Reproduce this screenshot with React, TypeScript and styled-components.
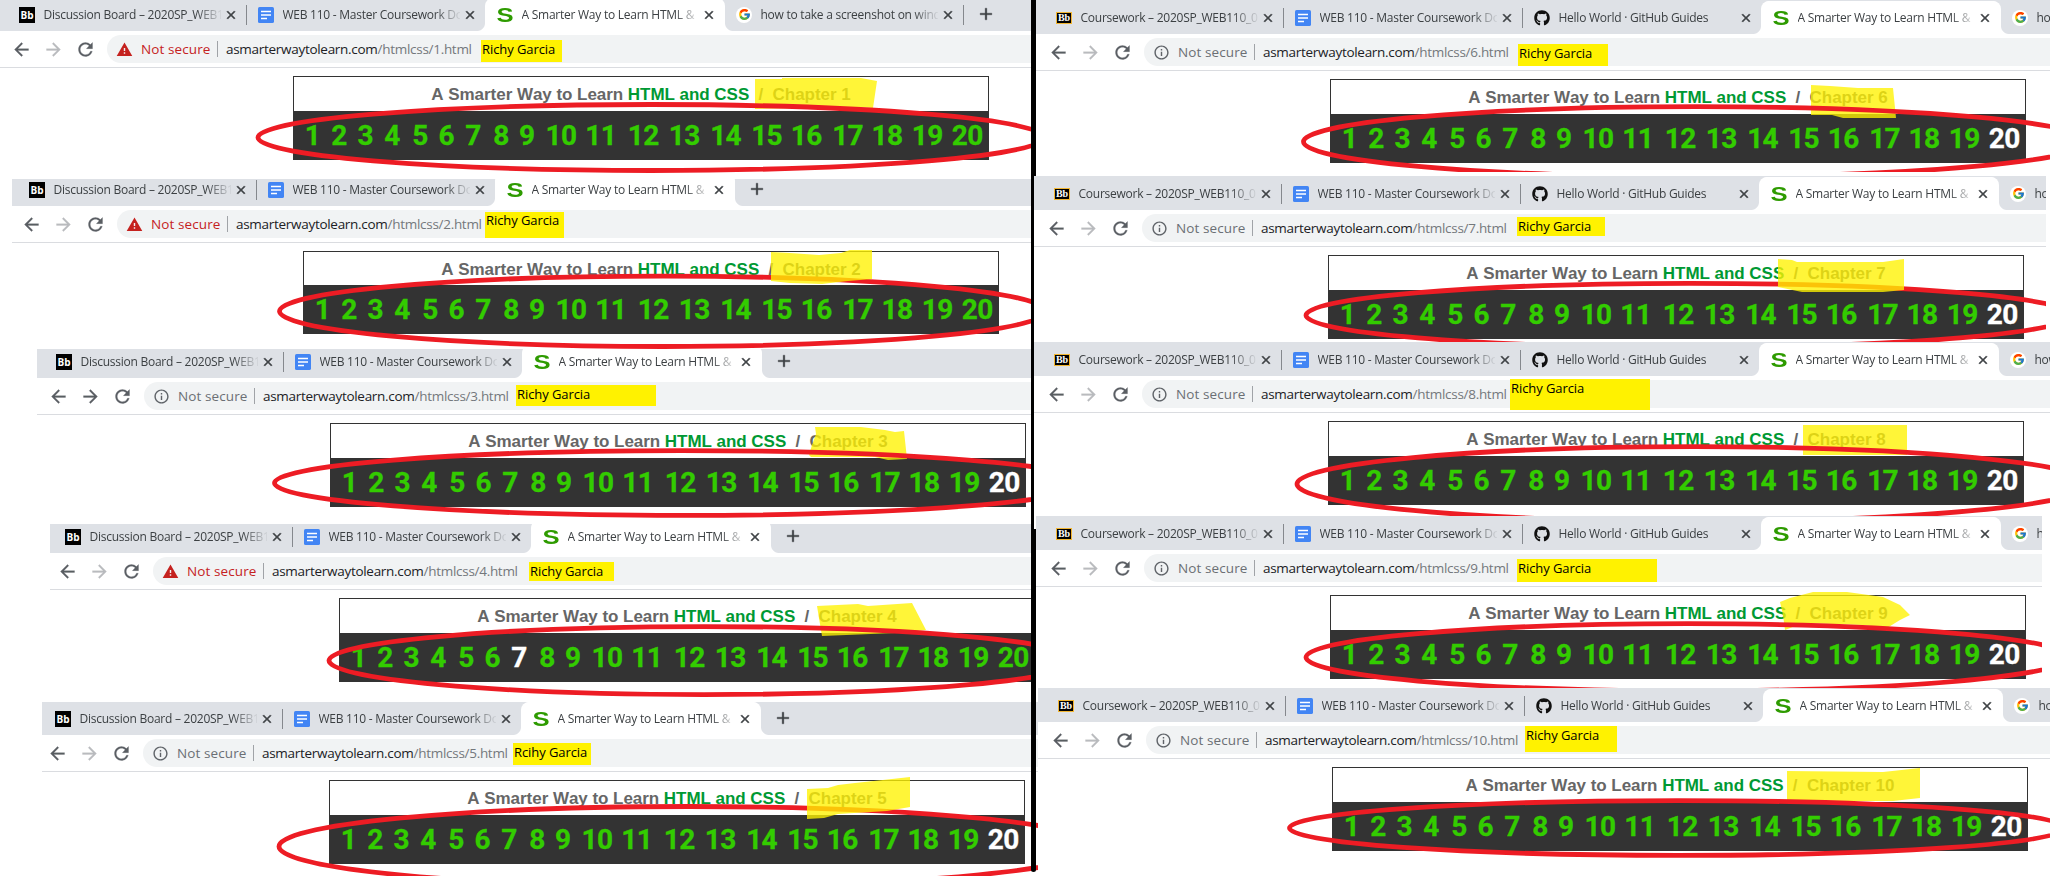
import React from 'react';
import styled, { createGlobalStyle, css } from 'styled-components';
import {
  MdAdd,
  MdArrowBack,
  MdArrowForward,
  MdClose,
  MdInfoOutline,
  MdRefresh,
  MdWarning,
} from 'react-icons/md';
import { FaGithub } from 'react-icons/fa';
import { FcGoogle } from 'react-icons/fc';

const ui = '"Open Sans", "Noto Sans", sans-serif';
const heading = '"Liberation Sans", Arial, sans-serif';

const GlobalStyle = createGlobalStyle`
  * { box-sizing: border-box; }
  body { margin: 0; background: #fff; overflow: hidden; }
`;

const Board = styled.main`
  position: relative;
  width: 2050px;
  height: 876px;
  overflow: hidden;
  background: #fff;
`;

const Divider = styled.div<{ $top: number; $height: number; $width?: number; $round?: boolean }>`
  position: absolute;
  left: 1031px;
  top: ${(p) => p.$top}px;
  width: ${(p) => p.$width ?? 5}px;
  height: ${(p) => p.$height}px;
  background: #000;
  border-radius: ${(p) => (p.$round ? '0 0 3px 3px' : 0)};
`;

const WindowFrame = styled.section<{ $x: number; $y: number; $w: number; $h: number }>`
  position: absolute;
  left: ${(p) => p.$x}px;
  top: ${(p) => p.$y}px;
  width: ${(p) => p.$w}px;
  height: ${(p) => p.$h}px;
  overflow: hidden;
  background: #fff;
`;

const TabStrip = styled.div<{ $h: number; $shift: number }>`
  display: flex;
  align-items: flex-end;
  height: ${(p) => p.$h}px;
  padding-left: ${(p) => p.$shift + 8}px;
  background: #dee1e6;
  overflow: hidden;
`;

const flare = css`
  content: '';
  position: absolute;
  bottom: 0;
  width: 8px;
  height: 8px;
`;

const TabItem = styled.div<{ $active?: boolean; $line?: boolean }>`
  position: relative;
  display: flex;
  flex: none;
  align-items: center;
  width: 239px;
  height: 33px;
  padding: 0 8px 0 11px;
  ${(p) =>
    p.$line &&
    css`
      &::after {
        content: '';
        position: absolute;
        right: 0;
        top: 7px;
        width: 1px;
        height: 20px;
        background: #85888d;
      }
    `}
  ${(p) =>
    p.$active &&
    css`
      background: #fff;
      border-radius: 8px 8px 0 0;
      box-shadow: -1px 0 0 #fff;
      &::before {
        ${flare}
        left: -9px;
        background: radial-gradient(circle at 0 0, transparent 7.5px, #fff 8.5px);
      }
      &::after {
        ${flare}
        right: -8px;
        background: radial-gradient(circle at 100% 0, transparent 7.5px, #fff 8.5px);
      }
    `}
`;

const TabTitle = styled.span`
  flex: none;
  width: 177px;
  margin-left: 8.5px;
  overflow: hidden;
  white-space: nowrap;
  font: 12px/18px ${ui};
  letter-spacing: -0.25px;
  color: #3c4043;
  mask-image: linear-gradient(to right, #000 152px, transparent 179px);
`;

const TabClose = styled(MdClose)`
  flex: none;
  width: 14px;
  height: 14px;
  margin-left: 3.5px;
  color: #3c4043;
  path:not([fill='none']) {
    stroke: currentColor;
    stroke-width: 1px;
  }
`;

const NewTab = styled(MdAdd)`
  flex: none;
  width: 20px;
  height: 20px;
  margin: 0 0 7px 12px;
  color: #3c4043;
  path:not([fill='none']) {
    stroke: currentColor;
    stroke-width: 0.4px;
  }
`;

const IconSlot = styled.span`
  display: flex;
  flex: none;
  align-items: center;
  justify-content: center;
  width: 16px;
  height: 16px;
`;

const BoardIcon = styled(IconSlot)`
  background: #000;
  color: #fff;
  font: bold 10px/16px ${ui};
`;

const CourseIcon = styled(IconSlot)`
  height: 12px;
  border: 1px solid #f2b632;
  background: #000;
  color: #fff;
  font: bold 10px/10px "Liberation Serif", serif;
`;

const SiteIcon = styled(IconSlot)`
  color: #2e9b00;
  font: bold 21px/16px ${heading};
  transform: scaleX(1.22);
`;

const GoogleDisc = styled(IconSlot)`
  border-radius: 50%;
  background: #fff;
`;

const Toolbar = styled.div<{ $shift: number }>`
  display: flex;
  height: 37px;
  padding: 4px 0 0 ${(p) => p.$shift + 10.5}px;
  border-bottom: 1px solid #dadce0;
`;

const NavButton = styled.span<{ $dim?: boolean }>`
  display: flex;
  flex: none;
  align-items: center;
  width: 32px;
  height: 28px;
  color: ${(p) => (p.$dim ? '#b9bbbe' : '#5a5e63')};
  svg {
    width: 21px;
    height: 21px;
  }
  path:not([fill='none']) {
    stroke: currentColor;
    stroke-width: 0.3px;
  }
`;

const Omnibox = styled.div`
  display: flex;
  flex: 1;
  align-items: center;
  height: 28px;
  margin-left: 0.5px;
  padding-left: 9px;
  border-radius: 14px 0 0 14px;
  background: #f1f3f4;
  white-space: nowrap;
  font: 13.5px/20px ${ui};
`;

const Security = styled.span<{ $alert: boolean }>`
  display: flex;
  flex: none;
  align-items: center;
  gap: 8px;
  width: 100.5px;
  color: ${(p) => (p.$alert ? '#c5221f' : '#6b6f74')};
  letter-spacing: 0.1px;
  svg {
    width: 17px;
    height: 17px;
    color: ${(p) => (p.$alert ? '#c5221f' : '#5f6368')};
  }
`;

const Address = styled.span`
  padding-left: 8.5px;
  color: #74787c;
  letter-spacing: -0.29px;
  b {
    font-weight: 400;
    color: #202124;
  }
`;

const AddressLine = styled.i`
  width: 1px;
  height: 16px;
  background: #a0a3a7;
`;

const Lesson = styled.article<{ $shift: number }>`
  width: 696px;
  margin: 8px 0 0 ${(p) => p.$shift + 293}px;
  border: 1px solid #333;
  border-bottom: 0;
`;

const LessonTitle = styled.h1<{ $h: number }>`
  height: ${(p) => p.$h - 1}px;
  margin: 0;
  text-align: center;
  white-space: pre;
  font: bold 17px/35px ${heading};
  font-kerning: none;
  letter-spacing: -0.04px;
  color: #666;
  em {
    font-style: normal;
    color: #093;
  }
`;

const ChapterBar = styled.nav`
  display: flex;
  height: 49px;
  margin: 0 -1px;
  background: #333;
`;

const ChapterLink = styled.a<{ $w: number; $gap: number; $visited: boolean }>`
  flex: none;
  display: flex;
  justify-content: center;
  width: ${(p) => p.$w}px;
  margin-left: ${(p) => p.$gap}px;
  font: bold 28px/49px Roboto, ${heading};
  letter-spacing: -0.6px;
  color: ${(p) => (p.$visited ? '#fff' : '#3c0')};
  -webkit-text-stroke: 0.3px currentColor;
`;

const NameTag = styled.span<{ $box: Box; $pad: number }>`
  position: absolute;
  left: ${(p) => p.$box[0]}px;
  top: ${(p) => p.$box[1]}px;
  width: ${(p) => p.$box[2]}px;
  height: ${(p) => p.$box[3]}px;
  padding: ${(p) => p.$pad}px 0 0 1px;
  background: #fff200;
  color: #000;
  white-space: nowrap;
  font: 13px/16px ${ui};
  letter-spacing: -0.08px;
`;

const Ink = styled.svg`
  position: absolute;
  inset: 0;
  width: 100%;
  height: 100%;
  pointer-events: none;
`;

type Box = [number, number, number, number];

type Shot = {
  chapter: number;
  name: string;
  /* left, top, right, bottom on the board */
  frame: Box;
  /* x that the browser's left edge would have */
  origin: number;
  stripBottom: number;
  titleHeight?: number;
  alert?: boolean;
  canForward?: boolean;
  visited?: number;
  /* left, top, right, bottom of the name tag, then its text's centre line */
  tag: Box;
  tagText: number;
  /* cx, cy, rx, ry */
  ring: Box;
  marker: string;
  markerOnTop?: boolean;
};

const shots: Shot[] = [
  {
    chapter: 1, name: 'Richy Garcia', frame: [0, 0, 1031, 179], origin: 0, stripBottom: 31, alert: true,
    tag: [481, 40, 562, 62], tagText: 50, ring: [651, 137.5, 393, 33],
    marker: '755,79 782,79 782,78 861,78 877,81 873,108 858,107 755,109',
  },
  {
    chapter: 2, name: 'Richy Garcia', frame: [12, 179, 1031, 349], origin: 10, stripBottom: 206, titleHeight: 34, alert: true,
    tag: [485, 212, 564, 238], tagText: 221, ring: [663, 311.3, 383.5, 35.2],
    marker: '771,252 790,253 819,255 841,253 850,250 872,250 872,279 848,281 822,284 790,283 771,281', markerOnTop: true,
  },
  {
    chapter: 3, name: 'Richy Garcia', frame: [37, 349, 1031, 524], origin: 37, stripBottom: 378, canForward: true, visited: 20,
    tag: [516, 385, 656, 406], tagText: 395, ring: [681, 483, 406.5, 32.4],
    marker: '815,427 861,427 885,430 895,432 904,431 907,459 888,460 875,457 811,457 809,455 812,445 816,434',
  },
  {
    chapter: 4, name: 'Richy Garcia', frame: [50, 524, 1031, 702], origin: 46, stripBottom: 553, alert: true, visited: 7,
    tag: [529, 562, 614, 581], tagText: 572, ring: [704, 660.6, 375, 34],
    marker: '817,606 858,604 868,606 912,603 926,630 895,633 822,636',
  },
  {
    chapter: 5, name: 'Rcihy Garcia', frame: [42, 702, 1038, 876], origin: 36, stripBottom: 735, visited: 20,
    tag: [513, 743, 591, 765], tagText: 753, ring: [689, 846.5, 410, 40],
    marker: '807,789 828,788 838,785 855,783 892,779 910,777 910,807 887,811 838,814 824,818 807,819', markerOnTop: true,
  },
  {
    chapter: 6, name: 'Richy Garcia', frame: [1036, 0, 2050, 172], origin: 1037, stripBottom: 34, visited: 20,
    tag: [1518, 44, 1608, 66], tagText: 54, ring: [1696.5, 141.7, 393, 35],
    marker: '1811,85 1830,86 1858,88 1893,88 1896,118 1843,118 1832,115 1811,115',
  },
  {
    chapter: 7, name: 'Richy Garcia', frame: [1034, 176, 2046, 342], origin: 1035, stripBottom: 210, visited: 20,
    tag: [1517, 217, 1605, 236], tagText: 227, ring: [1689, 315.3, 383, 32],
    marker: '1778,259 1792,260 1797,262 1883,262 1904,259 1904,290 1883,292 1802,292 1778,287', markerOnTop: true,
  },
  {
    chapter: 8, name: 'Richy Garcia', frame: [1034, 342, 2050, 516], origin: 1035, stripBottom: 376, visited: 20,
    tag: [1510, 379, 1650, 410], tagText: 389, ring: [1694, 484, 397, 37.4],
    marker: '1803,425 1907,425 1907,455 1803,455',
  },
  {
    chapter: 9, name: 'Richy Garcia', frame: [1036, 516, 2042, 688], origin: 1037, stripBottom: 550, visited: 20,
    tag: [1517, 559, 1657, 582], tagText: 569, ring: [1688, 657.3, 382, 33.6],
    marker: '1780,602 1790,598 1813,592 1847,592 1883,597 1900,605 1910,615 1900,620 1887,628 1863,625 1803,623 1785,630 1783,615',
  },
  {
    chapter: 10, name: 'Richy Garcia', frame: [1038, 688, 2050, 876], origin: 1039, stripBottom: 722, visited: 20,
    tag: [1525, 726, 1617, 752], tagText: 736, ring: [1677.5, 828, 388, 27.4],
    marker: '1787,771 1883,772 1920,768 1920,798 1893,801 1787,801',
  },
];

/* centre of each chapter number, measured from the bar's left edge */
const centres = [
  19.5, 46, 72.3, 99, 127, 153.3, 180, 208, 233.7, 268, 307.7, 350.2, 391.3, 432.7, 473.7, 513.3, 554.7, 594, 634.3, 674.3,
];
const linkWidth = (i: number) => (i < 9 ? 18 : 34);
const linkGap = (i: number) =>
  i === 0
    ? centres[0] - linkWidth(0) / 2
    : centres[i] - centres[i - 1] - (linkWidth(i) + linkWidth(i - 1)) / 2;

const DocsIcon = () => (
  <IconSlot>
    <svg width="16" height="16" viewBox="0 0 16 16">
      <rect width="16" height="16" rx="1.6" fill="#4285f4" />
      <path d="M3 4.5h10M3 8h10M3 11.5h6" stroke="#fff" strokeWidth="1.6" />
    </svg>
  </IconSlot>
);

type TabData = { icon: React.ReactNode; title: string; active?: boolean; line?: boolean };

const siteTab: TabData = { icon: <SiteIcon>S</SiteIcon>, title: 'A Smarter Way to Learn HTML &', active: true };
const searchTab: TabData = {
  icon: <GoogleDisc><FcGoogle size={13} /></GoogleDisc>,
  title: 'how to take a screenshot on wind',
  line: true,
};
const docsTab: TabData = { icon: <DocsIcon />, title: 'WEB 110 - Master Coursework Do' };

function tabsFor(chapter: number): TabData[] {
  if (chapter > 5) {
    return [
      { icon: <CourseIcon>Bb</CourseIcon>, title: 'Coursework – 2020SP_WEB110_0', line: true },
      { ...docsTab, line: true },
      { icon: <IconSlot><FaGithub size={16} color="#111" /></IconSlot>, title: 'Hello World · GitHub Guides' },
      siteTab,
      searchTab,
    ];
  }
  const tabs = [
    { icon: <BoardIcon>Bb</BoardIcon>, title: 'Discussion Board – 2020SP_WEB1', line: true },
    docsTab,
    siteTab,
  ];
  return chapter === 1 ? [...tabs, searchTab] : tabs;
}

function BrowserShot({ shot }: { shot: Shot }) {
  const [left, top, right, bottom] = shot.frame;
  const shift = shot.origin - left;
  const [tl, tt, tr, tb] = shot.tag;
  const [cx, cy, rx, ry] = shot.ring;
  const marker = <polygon points={shot.marker} fill="#fff200" fillOpacity={0.78} />;

  return (
    <WindowFrame $x={left} $y={top} $w={right - left} $h={bottom - top}>
      <TabStrip $h={shot.stripBottom - top} $shift={shift}>
        {tabsFor(shot.chapter).map((tab) => (
          <TabItem key={tab.title} $active={tab.active} $line={tab.line}>
            {tab.icon}
            <TabTitle>{tab.title}</TabTitle>
            <TabClose />
          </TabItem>
        ))}
        {shot.chapter <= 5 && <NewTab />}
      </TabStrip>
      <Toolbar $shift={shift}>
        <NavButton><MdArrowBack /></NavButton>
        <NavButton $dim={!shot.canForward}><MdArrowForward /></NavButton>
        <NavButton><MdRefresh /></NavButton>
        <Omnibox>
          <Security $alert={!!shot.alert}>
            {shot.alert ? <MdWarning /> : <MdInfoOutline />}
            Not secure
          </Security>
          <AddressLine />
          <Address>
            <b>asmarterwaytolearn.com</b>/htmlcss/{shot.chapter}.html
          </Address>
        </Omnibox>
      </Toolbar>
      <Lesson $shift={shift}>
        <LessonTitle $h={shot.titleHeight ?? 35}>
          A Smarter Way to Learn <em>HTML and CSS</em>
          {`\u00a0 / \u00a0Chapter ${shot.chapter}`}
        </LessonTitle>
        <ChapterBar>
          {centres.map((_, i) => (
            <ChapterLink key={i} $w={linkWidth(i)} $gap={linkGap(i)} $visited={shot.visited === i + 1}>
              {i + 1}
            </ChapterLink>
          ))}
        </ChapterBar>
      </Lesson>
      <NameTag $box={[tl - left, tt - top, tr - tl, tb - tt]} $pad={Math.max(0, shot.tagText - tt - 9)}>
        {shot.name}
      </NameTag>
      <Ink viewBox={`${left} ${top} ${right - left} ${bottom - top}`}>
        {!shot.markerOnTop && marker}
        <ellipse cx={cx} cy={cy} rx={rx} ry={ry} fill="none" stroke="#ed1c24" strokeWidth={4.8} />
        {shot.markerOnTop && marker}
      </Ink>
    </WindowFrame>
  );
}

export default function App() {
  return (
    <>
      <GlobalStyle />
      <Board>
        {shots.map((shot) => (
          <BrowserShot key={shot.chapter} shot={shot} />
        ))}
        <Divider $top={0} $height={176} />
        <Divider $top={176} $height={353} $width={3} />
        <Divider $top={529} $height={343} $round />
      </Board>
    </>
  );
}
